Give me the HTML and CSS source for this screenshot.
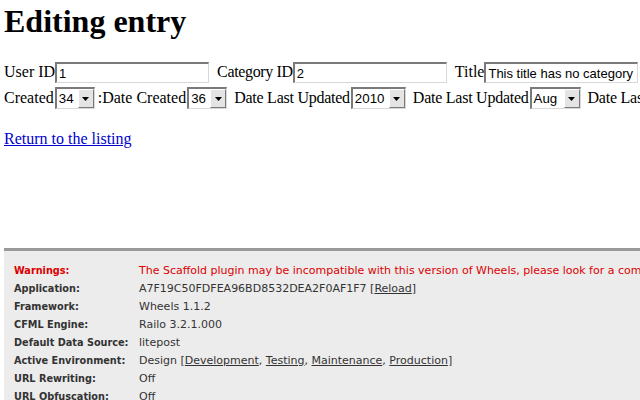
FILE: index.html
```html
<!DOCTYPE html>
<html>
<head>
<meta charset="utf-8">
<title>Editing entry</title>
<link rel="stylesheet" href="styles.css">
</head>
<body>
<h1 class="title">Editing entry</h1>
<form class="form">
  <div class="row">
    <label class="lbl">User ID</label><input class="txt" type="text" value="1">
    <label class="lbl gap cat">Category ID</label><input class="txt" type="text" value="2">
    <label class="lbl gap">Title</label><input class="txt" type="text" value="This title has no category">
  </div>
  <div class="row row2">
    <label class="lbl">Created</label><span class="sel w34"><span class="val">34</span><span class="btn"><svg width="7" height="4" viewBox="0 0 7 4"><path d="M0 0H7L3.5 4Z" fill="#000"/></svg></span></span>
    <label class="lbl tight">:Date Created</label><span class="sel w34"><span class="val">36</span><span class="btn"><svg width="7" height="4" viewBox="0 0 7 4"><path d="M0 0H7L3.5 4Z" fill="#000"/></svg></span></span>
    <label class="lbl gap dlu">Date Last Updated</label><span class="sel w2010"><span class="val">2010</span><span class="btn"><svg width="7" height="4" viewBox="0 0 7 4"><path d="M0 0H7L3.5 4Z" fill="#000"/></svg></span></span>
    <label class="lbl gap dlu">Date Last Updated</label><span class="sel waug"><span class="val">Aug</span><span class="btn"><svg width="7" height="4" viewBox="0 0 7 4"><path d="M0 0H7L3.5 4Z" fill="#000"/></svg></span></span>
    <label class="lbl gap dlu">Date Last Updated</label>
  </div>
</form>
<p class="back"><a href="#">Return to the listing</a></p>
<div class="debug">
  <table class="dbg">
    <tr><th class="warn">Warnings:</th><td class="warn">The Scaffold plugin may be incompatible with this version of Wheels, please look for a compatible version of the plugin.</td></tr>
    <tr><th>Application:</th><td>A7F19C50FDFEA96BD8532DEA2F0AF1F7 [<a href="#">Reload</a>]</td></tr>
    <tr><th>Framework:</th><td>Wheels 1.1.2</td></tr>
    <tr><th>CFML Engine:</th><td>Railo 3.2.1.000</td></tr>
    <tr><th>Default Data Source:</th><td>litepost</td></tr>
    <tr><th>Active Environment:</th><td>Design [<a href="#">Development</a>, <a href="#">Testing</a>, <a href="#">Maintenance</a>, <a href="#">Production</a>]</td></tr>
    <tr><th>URL Rewriting:</th><td>Off</td></tr>
    <tr><th>URL Obfuscation:</th><td>Off</td></tr>
  </table>
</div>
</body>
</html>
```
FILE: styles.css
```css
html, body {
  overflow: hidden;
}
body {
  margin: 0;
  padding: 0 0 0 4px;
  width: 900px;
  height: 400px;
  font-family: "Liberation Serif", serif;
  font-size: 16px;
  color: #000;
  background: #fff;
}
.title {
  margin: 0;
  font-size: 32px;
  font-weight: bold;
  line-height: 42px;
}
.form {
  margin-top: 17px;
}
.row {
  white-space: nowrap;
  height: 26px;
  display: flex;
  align-items: center;
}
.lbl {
  display: inline-block;
}
.gap {
  margin-left: 8px;
}
.cat {
  letter-spacing: -0.35px;
}
.dlu {
  margin-left: 7px;
  letter-spacing: -0.25px;
}
.tight {
  margin-left: 3px;
}
.txt {
  box-sizing: border-box;
  width: 154px;
  height: 21px;
  margin: 0;
  padding: 1px 2px 0;
  border-style: solid;
  border-width: 2px 1px 1px 2px;
  border-color: #7a7a7a #d8d8d8 #d8d8d8 #7a7a7a;
  font-family: "Liberation Sans", sans-serif;
  font-size: 13px;
  color: #000;
  background: #fff;
}
.sel {
  box-sizing: border-box;
  display: inline-flex;
  align-items: stretch;
  height: 22px;
  margin-left: 1px;
  border-style: solid;
  border-width: 2px 1px 1px 2px;
  border-color: #7a7a7a #d8d8d8 #d8d8d8 #7a7a7a;
  background: #fff;
}
.w34 { width: 40px; }
.w2010 { width: 55px; }
.waug { width: 51px; }
.val {
  flex: 1;
  padding: 0 0 0 2px;
  font-family: "Liberation Sans", sans-serif;
  font-size: 13.3px;
  line-height: 19px;
}
.btn {
  box-sizing: border-box;
  width: 16px;
  display: flex;
  align-items: center;
  justify-content: center;
  background: #e4e4e4;
  border-style: solid;
  border-width: 1px;
  border-color: #fff #7a7a7a #7a7a7a #fff;
}
.back {
  margin: 18px 0 0;
  line-height: 20px;
}
.back a {
  color: #0000cc;
}
.debug {
  margin-top: 99px;
  border-top: 3px solid #999;
  background: #ececec;
  padding: 10px 0 0 10px;
  height: 200px;
}
.dbg {
  border-collapse: collapse;
  font-family: "DejaVu Sans", Verdana, sans-serif;
  font-size: 11px;
  color: #333;
  white-space: nowrap;
}
.dbg th {
  text-align: left;
  font-family: "DejaVu Sans Condensed", "DejaVu Sans", sans-serif;
  font-size: 10.8px;
  font-weight: bold;
  padding: 0;
  height: 18px;
  width: 125px;
  min-width: 125px;
}
.dbg td {
  padding: 0;
  height: 18px;
}
.dbg a {
  color: #333;
}
.dbg .warn {
  color: #dd0000;
}
```
